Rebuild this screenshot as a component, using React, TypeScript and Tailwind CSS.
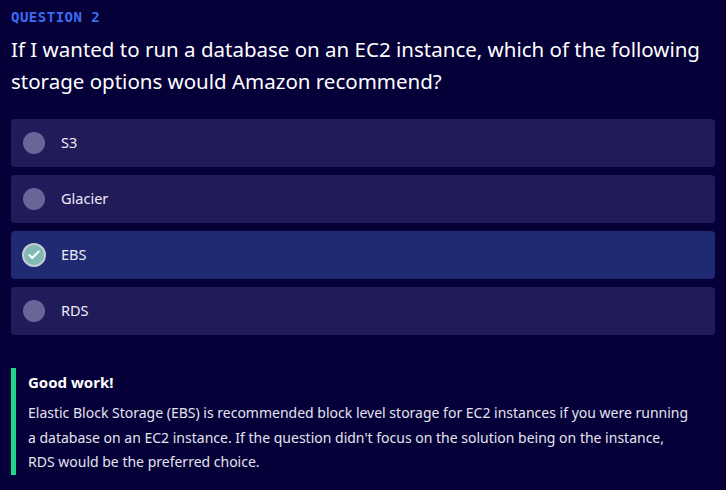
import { Check } from 'lucide-react';

const options = [
  { label: 'S3', selected: false },
  { label: 'Glacier', selected: false },
  { label: 'EBS', selected: true },
  { label: 'RDS', selected: false },
];

function Radio({ selected }: { selected: boolean }) {
  if (selected) {
    return (
      <span className="flex h-[24px] w-[24px] items-center justify-center rounded-full border-2 border-[#c8cad6] bg-[#80bab2]">
        <Check className="h-[14px] w-[14px] text-white" strokeWidth={3.5} />
      </span>
    );
  }
  return <span className="h-[22px] w-[22px] rounded-full bg-[#6a6498]" />;
}

export default function App() {
  return (
    <div
      className="min-h-[490px] w-[726px] bg-[#050038] px-[11px] pt-[8px] text-white"
      style={{ fontFamily: '"Noto Sans", "Open Sans", sans-serif' }}
    >
      <div className="font-['DejaVu_Sans_Mono',monospace] text-[14px] font-bold leading-[18px] tracking-[0.5px] text-[#3d6cf4]">
        QUESTION 2
      </div>
      <h1 className="mt-[7px] -mr-[8px] text-[20.5px] leading-[32px] font-normal text-white">
        If I wanted to run a database on an EC2 instance, which of the following storage options would Amazon recommend?
      </h1>
      <div className="mt-[22px] flex flex-col gap-[8px]">
        {options.map((o) => (
          <div
            key={o.label}
            className={`flex h-[48px] items-center gap-[15px] rounded-[4px] pl-[11px] ${
              o.selected ? 'bg-[#1f2a73]' : 'bg-[#221b5a]'
            }`}
          >
            <span className="flex w-[24px] justify-center">
              <Radio selected={o.selected} />
            </span>
            <span className="text-[14.5px] text-[#eceaf6]">{o.label}</span>
          </div>
        ))}
      </div>
      <div className="mt-[33px] flex border-l-[5px] border-[#1fd68a] pl-[12px] pt-[3px]">
        <div className="pr-[22px]">
          <div className="text-[15px] font-bold leading-[22px] text-white">Good work!</div>
          <p className="mt-[8px] text-[14px] leading-[24.5px] text-[#e4e3ef]">
            Elastic Block Storage (EBS) is recommended block level storage for EC2 instances if you were running a database on an EC2 instance. If the question didn't focus on the solution being on the instance, RDS would be the preferred choice.
          </p>
        </div>
      </div>
    </div>
  );
}
